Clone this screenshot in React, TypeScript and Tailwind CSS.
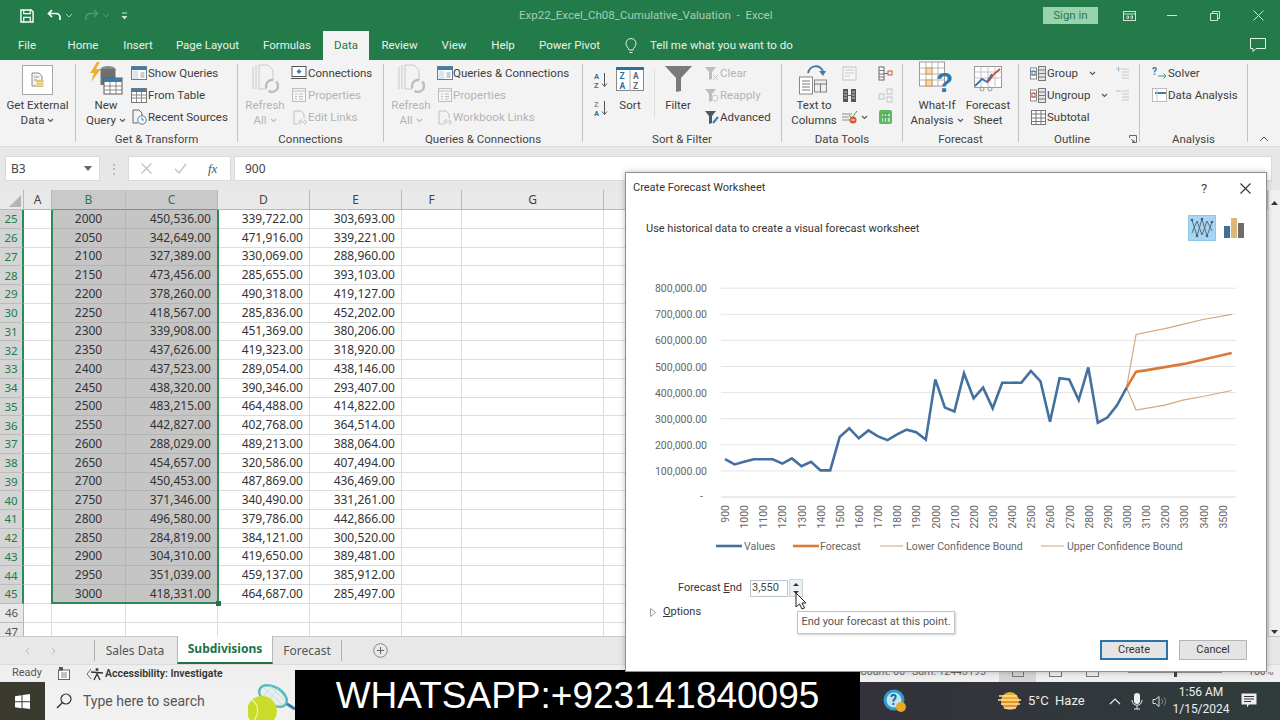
import React from "react";

const GREEN = "bg-[#227b49]";

const rows: [number, string, string, string, string][] = [
  [25, "2000", "450,536.00", "339,722.00", "303,693.00"],
  [26, "2050", "342,649.00", "471,916.00", "339,221.00"],
  [27, "2100", "327,389.00", "330,069.00", "288,960.00"],
  [28, "2150", "473,456.00", "285,655.00", "393,103.00"],
  [29, "2200", "378,260.00", "490,318.00", "419,127.00"],
  [30, "2250", "418,567.00", "285,836.00", "452,202.00"],
  [31, "2300", "339,908.00", "451,369.00", "380,206.00"],
  [32, "2350", "437,626.00", "419,323.00", "318,920.00"],
  [33, "2400", "437,523.00", "289,054.00", "438,146.00"],
  [34, "2450", "438,320.00", "390,346.00", "293,407.00"],
  [35, "2500", "483,215.00", "464,488.00", "414,822.00"],
  [36, "2550", "442,827.00", "402,768.00", "364,514.00"],
  [37, "2600", "288,029.00", "489,213.00", "388,064.00"],
  [38, "2650", "454,657.00", "320,586.00", "407,494.00"],
  [39, "2700", "450,453.00", "487,869.00", "436,469.00"],
  [40, "2750", "371,346.00", "340,490.00", "331,261.00"],
  [41, "2800", "496,580.00", "379,786.00", "442,866.00"],
  [42, "2850", "284,819.00", "384,121.00", "300,520.00"],
  [43, "2900", "304,310.00", "419,650.00", "389,481.00"],
  [44, "2950", "351,039.00", "459,137.00", "385,912.00"],
  [45, "3000", "418,331.00", "464,687.00", "285,497.00"],
];

const Chevron = ({ c = "#555" }: { c?: string }) => (
  <svg width="7" height="5" viewBox="0 0 7 5" className="inline-block ml-[3px] align-middle">
    <path d="M1 1l2.500 2.500L6 1" stroke={c} strokeWidth="1.100" fill="none" />
  </svg>
);

const Small = ({ w, icon, text, off, chev, iconW = 18 }: { w: number; icon?: React.ReactNode; text?: string; off?: boolean; chev?: boolean; iconW?: number }) => (
  <div className="h-[22px] flex items-center whitespace-nowrap" style={{ width: w }}>
    <div className="shrink-0 flex items-center justify-center" style={{ width: iconW }}>{icon}</div>
    {text && <span className={`mt-[2px] ${off ? "text-[#b4b4b4]" : "text-[#3d3d3d]"}`}>{text}</span>}
    {chev && <span className="ml-[8px]"><Chevron /></span>}
  </div>
);

const Big = ({ w, icon, l1, l2, off, chev }: { w: number; icon: React.ReactNode; l1: string; l2: string; off?: boolean; chev?: boolean }) => (
  <div className={`flex flex-col items-center shrink-0 -mt-[2px] ${off ? "text-[#b4b4b4]" : "text-[#3d3d3d]"}`} style={{ width: w }}>
    <div className="h-[38px] flex items-center justify-center">{icon}</div>
    <div className="leading-[15px] whitespace-nowrap">{l1}</div>
    <div className="leading-[15px] whitespace-nowrap">{l2}{chev && <Chevron c={off ? "#bbb" : "#555"} />}</div>
  </div>
);

const Group = ({ w, label, children, pr = 0 }: { w: number; label: string; children: React.ReactNode; pr?: number }) => (
  <div className="flex flex-col shrink-0" style={{ width: w }}>
    <div className="h-[72px] pt-[2px] flex">{children}</div>
    <div className="h-[14px] leading-[14px] text-center whitespace-nowrap text-[#444]" style={{ paddingRight: pr }}>{label}</div>
  </div>
);
const Sep = () => <div className="w-px my-[4px] bg-[#c4c4c4] shrink-0" />;

/* Ribbon icons */
const ExtData = () => (
  <div className="w-[31px] h-[30px] border border-[#a5a5a5] bg-white flex items-center justify-center mt-[2px]">
    <svg width="15" height="16" viewBox="0 0 15 16"><path d="M2 1h7l3 3v10H2z" fill="#f2f2f2" stroke="#8a8a8a" /><path d="M4 5h5M4 8h3" stroke="#999" /><rect x="6.500" y="8" width="7" height="7" fill="#e2c46a" /><path d="M6.500 10.500h7M6.500 13h7" stroke="#f4e6b8" /></svg>
  </div>
);
const NewQuery = () => (
  <svg width="34" height="36" viewBox="0 0 34 36">
    <path d="M8 1L1 12h4l-3 9 10-13H7l4-7z" fill="#eab02f" />
    <ellipse cx="19" cy="8" rx="7.500" ry="3" fill="#8a8a8a" />
    <path d="M11.500 8v16h15V8z" fill="#6f6f6f" />
    <rect x="15" y="17" width="18" height="16" fill="#fff" stroke="#5b5b5b" />
    <rect x="15" y="17" width="18" height="4" fill="#3d7ba8" />
    <path d="M15 25h18M15 29h18M21 21v12M27 21v12" stroke="#6f6f6f" strokeWidth=".8" />
  </svg>
);
const ShowQ = () => (
  <svg width="16" height="14" viewBox="0 0 16 14"><rect x=".5" y=".5" width="15" height="13" fill="#fff" stroke="#5d7f99" /><rect x="1" y="1" width="14" height="3" fill="#3f7eaa" /><rect x="1.500" y="4.500" width="6" height="8.500" fill="#dbe7f0" /><path d="M9.500 7h4M9.500 9h4M9.500 11h4" stroke="#9a9a9a" /></svg>
);
const FromT = () => (
  <svg width="16" height="15" viewBox="0 0 16 15"><rect x=".5" y=".5" width="15" height="14" fill="#fff" stroke="#777" /><rect x="1" y="1" width="14" height="3" fill="#3f7eaa" /><path d="M1 7h14M1 10h14M5.500 4v10M10.500 4v10" stroke="#8a8a8a" /></svg>
);
const Recent = () => (
  <svg width="16" height="16" viewBox="0 0 16 16"><path d="M2 1h6l3 3v5M2 1v13h5" fill="none" stroke="#666" /><circle cx="11" cy="11" r="4.200" fill="#fff" stroke="#3f7eaa" /><path d="M11 8.500V11h2" stroke="#3f7eaa" fill="none" /></svg>
);
const Conn = () => (
  <svg width="16" height="14" viewBox="0 0 16 14"><rect x="1" y=".5" width="14" height="10" fill="#fff" stroke="#555" /><path d="M0 12.500h16" stroke="#555" /><path d="M8 3l2.500 2.500L8 8 5.500 5.500z" fill="#3f7eaa" /></svg>
);
const Props = () => (
  <svg width="14" height="14" viewBox="0 0 14 14"><rect x=".5" y=".5" width="13" height="13" fill="#f7f7f7" stroke="#bdbdbd" /><path d="M1 3h12M3 6h2M7 6h4M3 8.500h2M7 8.500h4M3 11h2M7 11h4" stroke="#bdbdbd" /></svg>
);
const Links = () => (
  <svg width="15" height="15" viewBox="0 0 15 15"><path d="M2 1h7l3 3v4M2 1v13h4" fill="none" stroke="#c0c0c0" /><path d="M7 12a2 2 0 012-2h1M14 12a2 2 0 00-2-2M9 14a2 2 0 01-2-2M12 14a2 2 0 002-2M9 12h3" fill="none" stroke="#bdbdbd" /></svg>
);
const RefreshIc = () => (
  <svg width="28" height="30" viewBox="0 0 28 30"><path d="M2 3v22M5 1v24M8 1h9l5 5v10M8 1v24h8" fill="none" stroke="#c8c8c8" /><circle cx="21" cy="22" r="6" fill="#f3f3f3" stroke="#bdbdbd" strokeWidth="2.400" strokeDasharray="13 3" /></svg>
);
const AZ = ({ rev }: { rev?: boolean }) => (
  <svg width="14" height="18" viewBox="0 0 14 18">
    <text x="0" y="8" fontSize="7.500" fontWeight="700" fill={rev ? "#8a8a8a" : "#2e6f9e"}>{rev ? "Z" : "A"}</text>
    <text x="0" y="17" fontSize="7.500" fontWeight="700" fill={rev ? "#2e6f9e" : "#666"}>{rev ? "A" : "Z"}</text>
    <path d="M10.500 2v13M8 12.500l2.500 3 2.500-3" stroke="#555" fill="none" />
  </svg>
);
const ZA = () => (
  <svg width="28" height="24" viewBox="0 0 28 24">
    <rect x=".5" y=".5" width="27" height="23" fill="#fff" stroke="#888" />
    <rect x="0" y="0" width="28" height="3" fill="#2e6f9e" />
    <path d="M14 3v21" stroke="#aaa" />
    <text x="3.500" y="12" fontSize="8.500" fontWeight="700" fill="#2e6f9e">Z</text>
    <text x="3.500" y="22" fontSize="8.500" fontWeight="700" fill="#2e6f9e">A</text>
    <text x="17" y="12" fontSize="8.500" fontWeight="700" fill="#666">A</text>
    <text x="17" y="22" fontSize="8.500" fontWeight="700" fill="#666">Z</text>
  </svg>
);
const Funnel = () => (
  <svg width="27" height="26" viewBox="0 0 27 26"><path d="M0 0h27L16 12v13l-5 1V12z" fill="#7a7a7a" /></svg>
);
const SmallFunnel = ({ c, extra }: { c: string; extra?: React.ReactNode }) => (
  <svg width="16" height="15" viewBox="0 0 16 15"><path d="M1 1h11L8 6v7l-3 1V6z" fill={c} />{extra}</svg>
);
const TextCols = () => (
  <svg width="30" height="36" viewBox="0 0 30 36">
    <path d="M9 12C11 4 20 3 24 10" fill="none" stroke="#3f7eaa" strokeWidth="2" />
    <path d="M20 10h7l-3 5z" fill="#3f7eaa" />
    <rect x=".5" y="16" width="13" height="17" fill="#fff" stroke="#888" />
    <path d="M3 20h8M3 23h8M3 26h8M3 29h8" stroke="#777" />
    <rect x="15.500" y="19" width="12" height="12" fill="#eee" stroke="#888" />
    <path d="M15.500 23h12M21.500 23v8" stroke="#777" />
  </svg>
);
const Tiny = ({ kind }: { kind: number }) => {
  if (kind === 0) return <svg width="15" height="15" viewBox="0 0 15 15"><rect x="1" y="1" width="13" height="13" fill="#f7f7f7" stroke="#c4c4c4" /><path d="M3 4h9M3 7h9M3 10h5" stroke="#c8c8c8" /></svg>;
  if (kind === 1) return <svg width="15" height="15" viewBox="0 0 15 15"><rect x="1" y="1" width="5" height="13" fill="#555" /><rect x="9" y="1" width="5" height="13" fill="#555" /><path d="M6 7.500h3" stroke="#3f7eaa" /><path d="M2 4h3M2 7h3M2 10h3M10 4h3M10 7h3M10 10h3" stroke="#ccc" /></svg>;
  if (kind === 2) return <svg width="17" height="14" viewBox="0 0 17 14"><path d="M1 4h10M1 7h7M1 10h8" stroke="#8a8a8a" /><path d="M8 5l3 3 5-7" stroke="#4d9a5f" fill="none" /><circle cx="12" cy="10" r="3.500" fill="#d9572f" /><path d="M10 10h4" stroke="#fff" /></svg>;
  if (kind === 3) return <svg width="15" height="15" viewBox="0 0 15 15"><rect x="1" y="1" width="5" height="13" fill="#fff" stroke="#666" /><path d="M1 4.500h5M1 8h5M1 11h5" stroke="#777" /><rect x="10" y="5" width="4" height="4" fill="none" stroke="#cf5a34" /><path d="M6 7.500h4" stroke="#3f7eaa" /></svg>;
  if (kind === 4) return <svg width="15" height="15" viewBox="0 0 15 15"><rect x="1" y="6" width="5" height="5" fill="none" stroke="#c4c4c4" /><rect x="9" y="1" width="5" height="5" fill="none" stroke="#c4c4c4" /><rect x="9" y="9" width="5" height="5" fill="none" stroke="#c4c4c4" /></svg>;
  return <svg width="15" height="16" viewBox="0 0 15 16"><rect x="1" y="1" width="13" height="14" rx="2" fill="#5cb85f" /><rect x="4" y="5" width="8" height="8" fill="#b9e3b3" /><path d="M6 4v9M9 4v9M4 8h8" stroke="#3a8a4a" /></svg>;
};
const WhatIf = () => (
  <svg width="36" height="36" viewBox="0 0 36 36" className="overflow-visible">
    <rect x=".5" y="1" width="25" height="24" fill="#fff" stroke="#9a9a9a" />
    <path d="M.5 7h25M.5 13h25M.5 19h25M7 1v24M13 1v24M19 1v24" stroke="#b5b5b5" />
    <rect x="7" y="7" width="6" height="6" fill="#f3d9b0" stroke="#d99a4a" />
    <rect x="7" y="19" width="6" height="6" fill="#f3d9b0" stroke="#d99a4a" />
    <text x="17" y="31" fontSize="28" fontWeight="700" fill="#2f78ae" fontFamily="'Liberation Sans',sans-serif">?</text>
  </svg>
);
const FSheet = () => (
  <svg width="28" height="26" viewBox="0 0 28 26">
    <rect x=".5" y=".5" width="27" height="21" fill="#fff" stroke="#9a9a9a" />
    <path d="M.5 6h27M.5 12h27M7 .5v21M14 .5v21M21 .5v21" stroke="#c4c4c4" />
    <path d="M1 20l7-7 5 3 5-8" stroke="#2f78ae" strokeWidth="1.800" fill="none" />
    <path d="M14 16l6-8 6-5" stroke="#cf4a35" strokeWidth="1.800" fill="none" />
    <circle cx="8" cy="23" r="2" fill="none" stroke="#999" /><circle cx="16" cy="23" r="2" fill="none" stroke="#999" />
  </svg>
);
const Outline = ({ red }: { red?: boolean }) => (
  <svg width="16" height="15" viewBox="0 0 16 15"><rect x=".5" y="2" width="6" height="11" fill="#fff" stroke="#888" /><path d="M1 5.500h5M1 9h5" stroke="#999" /><rect x="2" y="5" width="3" height="4" fill="none" stroke={red ? "#cf5a34" : "#3f7eaa"} /><rect x="8.500" y=".5" width="7" height="14" fill="#e5e5e5" stroke="#777" /><path d="M8.500 4h7M8.500 7.500h7M8.500 11h7" stroke="#777" /></svg>
);
const Subt = () => (
  <svg width="15" height="15" viewBox="0 0 15 15"><rect x=".5" y=".5" width="14" height="14" fill="#fff" stroke="#777" /><path d="M.5 4h14M.5 8h14M.5 11.500h14M5 .5v14M10 .5v14" stroke="#777" /></svg>
);
const PlusMinus = ({ plus }: { plus?: boolean }) => (
  <svg width="14" height="14" viewBox="0 0 14 14"><path d="M6 3h7M6 6h7M6 9h7M6 12h7" stroke="#c8c8c8" />{plus ? <path d="M0 3h5M2.500 .5v5" stroke="#9fc1da" /> : <path d="M0 3h5" stroke="#9fc1da" />}</svg>
);

const values = [145, 125, 135, 145, 145, 145, 128, 148, 118, 135, 102, 102, 230, 263, 225, 255, 232, 218, 240, 258, 248, 220,
  450.5, 342.6, 327.4, 473.5, 378.3, 418.6, 339.9, 437.6, 437.5, 438.3, 483.2, 442.8, 288, 454.7, 450.5, 371.3, 496.6, 284.8, 304.3, 351, 418.3];
const X = (i: number) => 724 + 9.56 * i;
const Y = (v: number) => 497 - v * 0.261;
const line = (pts: [number, number][]) => pts.map(([i, v]) => `${X(i).toFixed(1)},${Y(v).toFixed(1)}`).join(" ");
const valuePts = line(values.map((v, i) => [i, v] as [number, number]));
const fc = line([[42, 418.3], [43, 480], [44, 485], [48, 510], [53, 552]]);
const low = line([[42, 418.3], [43, 333], [46, 352], [48, 372], [50, 385], [53, 408]]);
const up = line([[42, 418.3], [43, 623], [46, 645], [48, 662], [50, 680], [53, 700]]);
const yLabels = ["800,000.00", "700,000.00", "600,000.00", "500,000.00", "400,000.00", "300,000.00", "200,000.00", "100,000.00"];
const xLabels = Array.from({ length: 27 }, (_, i) => String(900 + i * 100));

const Chart = () => (
  <svg width="642" height="300" viewBox="625 265 642 300" className="block">
    {yLabels.map((t, i) => {
      const y = Y((8 - i) * 100);
      return (
        <g key={t}>
          <line x1="720" x2="1235" y1={y} y2={y} stroke="#e4e4e4" />
          <text x="706" y={y + 4} textAnchor="end" fontSize="10.500" fill="#666">{t}</text>
        </g>
      );
    })}
    <line x1="720" x2="1235" y1="497" y2="497" stroke="#d8d8d8" />
    <text x="702" y="500" textAnchor="end" fontSize="10.500" fill="#666">-</text>
    {xLabels.map((t, i) => (
      <text key={t} transform={`translate(${724 + i * 19.14 + 4} 505) rotate(-90)`} textAnchor="end" fontSize="10.500" fill="#666">{t}</text>
    ))}
    <polyline points={low} fill="none" stroke="#d6a878" strokeWidth="1.200" />
    <polyline points={up} fill="none" stroke="#d6a878" strokeWidth="1.200" />
    <polyline points={fc} fill="none" stroke="#d9793a" strokeWidth="2.600" />
    <polyline points={valuePts} fill="none" stroke="#44709f" strokeWidth="2.600" />
    <line x1="715" x2="741" y1="546" y2="546" stroke="#44709f" strokeWidth="2.600" />
    <text x="743" y="550" fontSize="10.500" fill="#666">Values</text>
    <line x1="792" x2="818" y1="546" y2="546" stroke="#d9793a" strokeWidth="2.600" />
    <text x="819" y="550" fontSize="10.500" fill="#666">Forecast</text>
    <line x1="879" x2="902" y1="546" y2="546" stroke="#d6b48c" strokeWidth="1.200" />
    <text x="905" y="550" fontSize="10.500" fill="#666">Lower Confidence Bound</text>
    <line x1="1040" x2="1063" y1="546" y2="546" stroke="#d6b48c" strokeWidth="1.200" />
    <text x="1066" y="550" fontSize="10.500" fill="#666">Upper Confidence Bound</text>
  </svg>
);

const Cell = ({ w, sel, children, align = "r" }: { w: number; sel?: boolean; children?: React.ReactNode; align?: "r" | "c" }) => (
  <div className={`shrink-0 h-full border-r border-b flex items-center ${align === "c" ? "justify-center" : "justify-end pr-[6px]"} ${sel ? "bg-[#c5c5c5] border-[#b4b4b4]" : "bg-white border-[#dcdcdc]"}`} style={{ width: w }}>
    {children}
  </div>
);

const Row = ({ n, b, c, d, e }: { n: number; b?: string; c?: string; d?: string; e?: string }) => {
  const sel = !!b;
  return (
    <div className="flex h-[18.75px] text-[12px] text-[#333] font-['Noto_Sans',sans-serif]">
      <div className={`w-[24px] shrink-0 flex items-center justify-center border-b border-[#bcbcbc] text-[11.5px] ${sel ? "bg-[#d4d4d4] text-[#1f7a4a] border-r-2 border-r-[#2a8a58]" : "bg-[#e8e8e8] text-[#555] border-r border-r-[#b5b5b5]"}`}>{n}</div>
      <Cell w={28} />
      <Cell w={74} sel={sel} align="c">{b}</Cell>
      <Cell w={92} sel={sel}>{c}</Cell>
      <Cell w={92}>{d}</Cell>
      <Cell w={92}>{e}</Cell>
      <Cell w={60} />
      <Cell w={142} />
      <Cell w={664} />
    </div>
  );
};

const HeadCell = ({ w, t, sel }: { w: number; t: string; sel?: boolean }) => (
  <div className={`shrink-0 h-full flex items-center justify-center border-r border-b border-[#b9b9b9] ${sel ? "bg-[#c9c9c9] text-[#2b7a52] border-b-[#6f9a82]" : "bg-[#e9e9e9] text-[#444]"}`} style={{ width: w }}>{t}</div>
);

export default function App() {
  return (
    <div className="relative w-[1280px] h-[720px] overflow-hidden flex flex-col bg-white font-['Roboto','Noto_Sans',sans-serif] text-[11.5px]">
      {/* title bar */}
      <div className={`h-[31px] shrink-0 ${GREEN} flex items-center`}>
        <div className="w-[20px]" />
        <svg width="14" height="14" viewBox="0 0 15 15"><path d="M1 1h11l2 2v11H1z" fill="none" stroke="#fff" strokeWidth="1.500" /><path d="M4 1v4h7V1M4 14V9h7v5" fill="none" stroke="#fff" strokeWidth="1.300" /></svg>
        <div className="w-[13px]" />
        <svg width="15" height="13" viewBox="0 0 15 13"><path d="M5 1L1.500 4.500 5 8M2 4.500h7a4 4 0 014 4V11" fill="none" stroke="#fff" strokeWidth="1.700" /></svg>
        <svg width="8" height="5" viewBox="0 0 8 5" className="ml-[3px]"><path d="M1 1l3 3 3-3" stroke="#a5cdb4" fill="none" /></svg>
        <div className="w-[11px]" />
        <svg width="15" height="13" viewBox="0 0 15 13"><path d="M10 1l3.500 3.500L10 8M13 4.500H6a4 4 0 00-4 4V11" fill="none" stroke="#4d9a6c" strokeWidth="1.700" /></svg>
        <svg width="8" height="5" viewBox="0 0 8 5" className="ml-[3px]"><path d="M1 1l3 3 3-3" stroke="#4d9a6c" fill="none" /></svg>
        <div className="w-[11px]" />
        <svg width="7" height="8" viewBox="0 0 7 8"><path d="M1 1h5" stroke="#cfe3d6" /><path d="M.5 4h6l-3 3.500z" fill="#cfe3d6" /></svg>
        <div className="w-[391px]" />
        <div className="w-[243px] text-center whitespace-nowrap text-[#a9cdb6]">Exp22_Excel_Ch08_Cumulative_Valuation&nbsp; -&nbsp; Excel</div>
        <div className="w-[281px]" />
        <div className="w-[55px] h-[17px] bg-[#98d3ae] text-[#2a7a50] flex items-center justify-center">Sign in</div>
        <div className="w-[25px]" />
        <svg width="13" height="10" viewBox="0 0 13 10"><rect x=".5" y=".5" width="12" height="9" fill="none" stroke="#cfe3d6" /><path d="M.5 3h12M4 5h1.500v2.500H4zM8 5h1.500v2.500H8z" stroke="#cfe3d6" /></svg>
        <div className="w-[31px]" />
        <div className="w-[10px] h-px bg-[#cfe3d6]" />
        <div className="w-[33px]" />
        <svg width="10" height="10" viewBox="0 0 10 10"><path d="M2.500 2.500V.5h7v7h-2M.5 2.500h7v7h-7z" fill="none" stroke="#cfe3d6" /></svg>
        <div className="w-[33px]" />
        <svg width="11" height="11" viewBox="0 0 11 11"><path d="M.5.500l10 10M10.500.500l-10 10" stroke="#cfe3d6" /></svg>
      </div>

      {/* tabs */}
      <div className={`h-[29px] shrink-0 ${GREEN} flex items-stretch text-[#e8f2ec]`}>
        {([["File", 54], ["Home", 58], ["Insert", 52], ["Page Layout", 87], ["Formulas", 72]] as [string, number][]).map(([t, w]) => (
          <div key={t} className="flex items-center justify-center" style={{ width: w }}>{t}</div>
        ))}
        <div className="w-[46px] bg-[#f3f3f3] text-[#227b49] flex items-center justify-center">Data</div>
        {([["Review", 61], ["View", 48], ["Help", 50], ["Power Pivot", 83]] as [string, number][]).map(([t, w]) => (
          <div key={t} className="flex items-center justify-center" style={{ width: w }}>{t}</div>
        ))}
        <div className="w-[39px] flex items-center justify-center">
          <svg width="12" height="16" viewBox="0 0 12 16"><path d="M4 12C3.500 9.500 1 8.500 1 5.500a5 5 0 0110 0C11 8.500 8.500 9.500 8 12zM4.500 14.500h3" fill="none" stroke="#e8f2ec" /></svg>
        </div>
        <div className="flex items-center whitespace-nowrap">Tell me what you want to do</div>
        <div className="flex-1 flex items-center justify-end pr-[14px]">
          <svg width="16" height="15" viewBox="0 0 16 15"><path d="M.5.500h15v10H6l-3 3v-3H.5z" fill="none" stroke="#e8f2ec" /></svg>
        </div>
      </div>

      {/* ribbon */}
      <div className="h-[86px] shrink-0 bg-[#f3f3f3] flex relative">
        <div className="w-[75px] shrink-0 flex flex-col">
          <div className="h-[72px] pt-[2px] flex"><Big w={75} icon={<ExtData />} l1="Get External" l2="Data" chev /></div>
        </div>
        <Sep />
        <Group w={161} label="Get & Transform">
          <div className="ml-[10px]"><Big w={40} icon={<NewQuery />} l1="New" l2="Query" chev /></div>
          <div className="ml-[4px] flex flex-col"><Small w={105} icon={<ShowQ />} text="Show Queries" /><Small w={105} icon={<FromT />} text="From Table" /><Small w={105} icon={<Recent />} text="Recent Sources" /></div>
        </Group>
        <Sep />
        <Group w={145} label="Connections">
          <div className="ml-[8px]"><Big w={38} icon={<RefreshIc />} l1="Refresh" l2="All" chev off /></div>
          <div className="ml-[6px] flex flex-col"><Small w={90} iconW={18} icon={<Conn />} text="Connections" /><Small w={90} iconW={18} icon={<Props />} text="Properties" off /><Small w={90} iconW={18} icon={<Links />} text="Edit Links" off /></div>
        </Group>
        <Sep />
        <Group w={198} label="Queries & Connections">
          <div className="ml-[8px]"><Big w={38} icon={<RefreshIc />} l1="Refresh" l2="All" chev off /></div>
          <div className="ml-[6px] flex flex-col"><Small w={140} iconW={17} icon={<ShowQ />} text="Queries & Connections" /><Small w={140} iconW={17} icon={<Props />} text="Properties" off /><Small w={140} iconW={17} icon={<Links />} text="Workbook Links" off /></div>
        </Group>
        <Sep />
        <Group w={198} label="Sort & Filter">
          <div className="ml-[11px] flex flex-col gap-[10px] pt-[9px] w-[16px]"><AZ /><AZ rev /></div>
          <div className="ml-[1px]"><Big w={38} icon={<ZA />} l1="Sort" l2=" " /></div>
          <div className="w-px h-[48px] mt-[8px] ml-[5px] bg-[#e0e0e0]" />
          <div className="ml-[4px]"><Big w={38} icon={<Funnel />} l1="Filter" l2=" " /></div>
          <div className="ml-[6px] flex flex-col">
            <Small w={78} iconW={17} icon={<SmallFunnel c="#bdbdbd" extra={<path d="M9 9l5 5M14 9l-5 5" stroke="#c8c8c8" />} />} text="Clear" off />
            <Small w={78} iconW={17} icon={<SmallFunnel c="#bdbdbd" extra={<circle cx="11" cy="10" r="3" fill="none" stroke="#b9cdda" />} />} text="Reapply" off />
            <Small w={78} iconW={17} icon={<SmallFunnel c="#4c5a66" extra={<path d="M9 13l5-6" stroke="#3f7eaa" strokeWidth="2" />} />} text="Advanced" />
          </div>
        </Group>
        <Sep />
        <Group w={120} label="Data Tools">
          <div className="ml-[9px]"><Big w={46} icon={<TextCols />} l1="Text to" l2="Columns" /></div>
          <div className="ml-[3px] flex flex-col"><Small w={36} icon={<Tiny kind={0} />} /><Small w={36} icon={<Tiny kind={1} />} /><Small w={36} iconW={28} icon={<span className="flex items-center"><Tiny kind={2} /><Chevron /></span>} /></div>
          <div className="flex flex-col"><Small w={18} icon={<Tiny kind={3} />} /><Small w={18} icon={<Tiny kind={4} />} /><Small w={18} icon={<Tiny kind={5} />} /></div>
        </Group>
        <Sep />
        <Group w={115} label="Forecast">
          <div className="ml-[7px]"><Big w={54} icon={<WhatIf />} l1="What-If" l2="Analysis" chev /></div>
          <div><Big w={48} icon={<FSheet />} l1="Forecast" l2="Sheet" /></div>
        </Group>
        <Sep />
        <Group w={120} label="Outline" pr={14}>
          <div className="ml-[10px] flex flex-col"><Small w={80} iconW={18} icon={<Outline />} text="Group" chev /><Small w={80} iconW={18} icon={<Outline red />} text="Ungroup" chev /><Small w={80} iconW={18} icon={<Subt />} text="Subtotal" /></div>
          <div className="ml-[7px] flex flex-col"><Small w={14} iconW={14} icon={<PlusMinus plus />} /><Small w={14} iconW={14} icon={<PlusMinus />} /></div>
        </Group>
        <Sep />
        <Group w={107} label="Analysis">
          <div className="ml-[10px] flex flex-col">
            <Small w={95} icon={<svg width="15" height="14" viewBox="0 0 15 14"><text x="0" y="9" fontSize="10" fontWeight="700" fill="#2f78ae">?</text><path d="M6 10h8M11.500 7.500l2.500 2.500-2.500 2.500" stroke="#4d9a6c" fill="none" /></svg>} text="Solver" />
            <Small w={95} icon={<svg width="15" height="14" viewBox="0 0 15 14"><rect x=".5" y=".5" width="14" height="13" fill="#fff" stroke="#bbb" /><rect x="3" y="4" width="11" height="2" fill="#3f7eaa" /><path d="M5 .5v13" stroke="#ccc" /></svg>} text="Data Analysis" />
          </div>
        </Group>
        <Sep />
        <div className="flex-1 flex items-end justify-center pb-[4px]">
          <svg width="10" height="6" viewBox="0 0 10 6"><path d="M1 5l4-4 4 4" fill="none" stroke="#555" /></svg>
        </div>
        <svg width="8" height="8" viewBox="0 0 8 8" className="absolute left-[1129px] top-[75px]"><path d="M.5 3V.5h7v7H3M2 4l3 3M5 5v2H3" fill="none" stroke="#666" /></svg>
      </div>

      {/* formula bar */}
      <div className="h-[44px] shrink-0 bg-[#e7e7e7] border-t border-[#dadada] flex items-start pt-[9px] text-[12px] text-[#444] font-['Noto_Sans',sans-serif]">
        <div className="ml-[5px] w-[95px] h-[25px] bg-white border border-[#dadada] flex items-center justify-between pl-[5px] pr-[7px]">
          <span>B3</span>
          <svg width="8" height="5" viewBox="0 0 8 5"><path d="M0 0h8L4 5z" fill="#666" /></svg>
        </div>
        <div className="w-[28px] h-[25px] flex items-center justify-center text-[#aaa] leading-none">⋮</div>
        <div className="w-[103px] h-[25px] bg-white border border-[#dadada] flex items-center">
          <svg width="11" height="11" viewBox="0 0 11 11" className="ml-[12px]"><path d="M.5.500l10 10M10.500.500l-10 10" stroke="#c0c0c0" strokeWidth="1.200" /></svg>
          <svg width="13" height="11" viewBox="0 0 13 11" className="ml-[22px]"><path d="M1 6l4 4 7-9" stroke="#c0c0c0" strokeWidth="1.300" fill="none" /></svg>
          <span className="ml-[21px] italic font-['Liberation_Serif',serif] text-[#555] text-[13px]">fx</span>
        </div>
        <div className="ml-[3px] w-[1038px] h-[25px] bg-white border border-[#dadada] flex items-center pl-[10px]">900</div>
      </div>

      {/* grid */}
      <div className="flex-1 min-h-0 flex overflow-hidden relative font-['Noto_Sans',sans-serif]">
        <div className="flex-1 min-w-0 overflow-hidden">
          <div className="flex h-[20px] text-[12px]">
            <div className="w-[24px] shrink-0 bg-[#e9e9e9] border-r border-b border-[#b9b9b9] relative">
              <svg width="12" height="12" viewBox="0 0 12 12" className="absolute right-[2px] bottom-[2px]"><path d="M12 0v12H0z" fill="#b5b5b5" /></svg>
            </div>
            <HeadCell w={28} t="A" />
            <HeadCell w={74} t="B" sel />
            <HeadCell w={92} t="C" sel />
            <HeadCell w={92} t="D" />
            <HeadCell w={92} t="E" />
            <HeadCell w={60} t="F" />
            <HeadCell w={142} t="G" />
            <HeadCell w={664} t="H" />
          </div>
          {rows.map(([n, b, c, d, e]) => <Row key={n} n={n} b={b} c={c} d={d} e={e} />)}
          <Row n={46} />
          <Row n={47} />
        </div>
        <div className="w-[12px] shrink-0 bg-[#f0f0f0] border-l border-[#d0d0d0] flex flex-col justify-between items-center pt-[11px] pb-[2px]">
          <svg width="7" height="4" viewBox="0 0 7 4"><path d="M3.500 0L7 4H0z" fill="#333" /></svg>
          <svg width="7" height="4" viewBox="0 0 7 4"><path d="M0 0h7L3.500 4z" fill="#333" /></svg>
        </div>
        {/* selection outline */}
        <div className="absolute left-[51px] top-[20px] w-[168px] h-[394px] border-x-2 border-b-2 border-[#2a8a58]" />
        <div className="absolute left-[216px] top-[411px] w-[5px] h-[5px] bg-[#217346]" />
      </div>

      {/* sheet tabs */}
      <div className="h-[28px] shrink-0 bg-[#e8e8e8] border-t border-[#c8c8c8] flex items-stretch text-[12px] text-[#555] font-['Noto_Sans',sans-serif]">
        <div className="w-[94px] flex items-center">
          <svg width="5" height="8" viewBox="0 0 5 8" className="ml-[25px]"><path d="M4 1L1 4l3 3" fill="none" stroke="#bbb" /></svg>
          <svg width="5" height="8" viewBox="0 0 5 8" className="ml-[21px]"><path d="M1 1l3 3-3 3" fill="none" stroke="#bbb" /></svg>
        </div>
        <div className="w-[83px] border-l border-[#b0b0b0] my-[3px] pr-[2px] flex items-center justify-center">Sales Data</div>
        <div className="w-[96px] bg-white border-x border-[#b8b8b8] border-b-2 border-b-[#217346] flex items-center justify-center font-bold text-[#217346] -mt-px">Subdivisions</div>
        <div className="w-[69px] border-r border-[#b0b0b0] my-[3px] flex items-center justify-center">Forecast</div>
        <div className="w-[76px] flex items-center justify-center">
          <svg width="15" height="15" viewBox="0 0 15 15"><circle cx="7.500" cy="7.500" r="6.800" fill="none" stroke="#888" /><path d="M7.500 4v7M4 7.500h7" stroke="#666" /></svg>
        </div>
      </div>

      {/* status bar */}
      <div className="h-[18px] shrink-0 bg-[#efefef] border-t border-[#dcdcdc] flex items-center text-[10.5px] text-[#555]">
        <span className="ml-[12px] w-[46px] text-[11px]">Ready</span>
        <svg width="12" height="13" viewBox="0 0 12 13"><rect x=".5" y="3" width="11" height="9.500" fill="#fff" stroke="#666" /><rect x="1" y="0" width="4" height="3.500" fill="#555" /><path d="M3 6h6M3 8h6M3 10h6" stroke="#888" /></svg>
        <svg width="18" height="14" viewBox="0 0 18 14" className="ml-[16px]"><path d="M5 2L1 7l4 5" fill="none" stroke="#666" /><circle cx="11" cy="2.500" r="1.500" fill="#444" /><path d="M5 5l12 1M8 13l3-6 3 6" fill="none" stroke="#333" strokeWidth="1.300" /></svg>
        <span className="ml-[1px] font-semibold text-[#333] whitespace-nowrap">Accessibility: Investigate</span>
      </div>

      {/* taskbar */}
      <div className="h-[38px] shrink-0 flex items-stretch">
        <div className="w-[45px] bg-[#3a3a2e] flex items-center justify-center">
          <svg width="15" height="15" viewBox="0 0 15 15"><path d="M0 2.200L6.500 1.200v6H0zM7.500 1l7.500-1v7.200H7.500zM0 8.200h6.500v6L0 13.200zM7.500 8.200H15V15l-7.500-1z" fill="#fff" /></svg>
        </div>
        <div className="w-[250px] bg-[#f1f1f1] flex items-center relative overflow-hidden">
          <svg width="16" height="16" viewBox="0 0 16 16" className="ml-[11px]"><circle cx="10" cy="6" r="5" fill="none" stroke="#333" strokeWidth="1.200" /><path d="M6.500 9.500L1 15" stroke="#333" strokeWidth="1.400" /></svg>
          <span className="ml-[11px] text-[14px] text-[#555] whitespace-nowrap">Type here to search</span>
          <svg width="48" height="38" viewBox="0 0 48 38" className="absolute left-[203px] top-0">
            <path d="M36 20l11 7" stroke="#2f7fa0" strokeWidth="3" />
            <ellipse cx="25" cy="14" rx="15" ry="9" transform="rotate(30 25 14)" fill="#e9eeee" stroke="#58bcc0" strokeWidth="2.500" />
            <path d="M16 6l18 16M22 4l14 14M12 12l16 12M20 20l10-14M14 16l10-12" stroke="#c3d6d8" strokeWidth=".8" />
            <circle cx="14" cy="29" r="15" fill="#c9dc2a" />
            <path d="M4 18c7 5 7 13 2 21" stroke="#eef5b0" fill="none" strokeWidth="1.300" />
          </svg>
        </div>
        <div className="flex-1 bg-linear-to-r from-[#3f2530] via-[#34303a] to-[#2f3c3c] flex items-center text-white relative">
          <div className="ml-[588px]">
            <svg width="24" height="24" viewBox="0 0 24 24"><circle cx="11" cy="11" r="10.500" fill="#2f9ccf" /><circle cx="11" cy="11" r="7.500" fill="#bfe4f2" /><text x="7" y="16" fontSize="14" fontWeight="700" fill="#1c6d9a">?</text><circle cx="18" cy="18" r="5" fill="#e8a820" /></svg>
          </div>
          <div className="ml-[91px]">
            <svg width="24" height="22" viewBox="0 0 24 22"><path d="M3 11a9 9 0 0118 0z" fill="#f1ae2a" /><path d="M3 11a9 9 0 0018 0z" fill="#e8912a" /><path d="M1 6h18M0 10h23M3 14h19M6 18h12" stroke="#f7e2a8" strokeWidth="1.500" /></svg>
          </div>
          <span className="ml-[6px] text-[13px] whitespace-nowrap text-[#eee] w-[58px]">5°C&nbsp; Haze</span>
          <svg width="12" height="7" viewBox="0 0 12 7" className="ml-[23px]"><path d="M1 6l5-5 5 5" fill="none" stroke="#eee" strokeWidth="1.100" /></svg>
          <svg width="12" height="17" viewBox="0 0 12 17" className="ml-[10px]"><rect x="3" y="0" width="6" height="11" rx="3" fill="#eee" /><path d="M1 7c0 7 10 7 10 0M6 13v3M3 16h6" stroke="#eee" fill="none" /></svg>
          <svg width="16" height="13" viewBox="0 0 16 13" className="ml-[9px]"><path d="M1 4.500h2.500L7 1.500v10L3.500 8.500H1z" fill="none" stroke="#ddd" /><path d="M9.500 4a3.500 3.500 0 010 5M12 2.500a6 6 0 010 8" fill="none" stroke="#888" /></svg>
          <div className="ml-[8px] w-[50px] flex flex-col items-center text-[12px] leading-[17px] text-[#eee] whitespace-nowrap">
            <span>1:56 AM</span><span>1/15/2024</span>
          </div>
          <svg width="16" height="16" viewBox="0 0 16 16" className="ml-[15px]"><path d="M.5.500h15v11H8l-2 3v-3H.5z" fill="#eee" /><path d="M3 3.500h10M3 6h10M3 8.500h7" stroke="#333" /></svg>
        </div>
      </div>

      {/* caption bar over the screen */}
      <div className="absolute left-[295px] top-[670px] w-[565px] h-[50px] pt-[1px] bg-black text-white flex items-center justify-center text-[37px] font-['Liberation_Sans',sans-serif] whitespace-nowrap">
        WHATSAPP:+923141840095
      </div>

      {/* status bar items left uncovered below the dialog */}
      <div className="absolute left-[860px] top-[672px] w-[420px] h-[10px] overflow-hidden bg-[#efefef] text-[10.500px] text-[#666]">
        <div className="absolute -top-[8px] left-[0px] whitespace-nowrap">Count: 66</div>
        <div className="absolute -top-[8px] left-[52px] whitespace-nowrap">Sum: 12443195</div>
        <div className="absolute left-[139px] top-0 w-[37px] h-[10px] bg-[#d5d5d5]" />
        <div className="absolute left-[152px] -top-[4px] w-[12px] h-[9px] border border-[#777]" />
        <div className="absolute left-[189px] -top-[4px] w-[13px] h-[9px] border border-[#777]" />
        <div className="absolute left-[226px] -top-[4px] w-[13px] h-[9px] border border-[#777]" />
        <div className="absolute left-[268px] top-0 w-[94px] h-px bg-[#999]" />
        <div className="absolute left-[314px] top-0 w-[3px] h-[5px] bg-[#444]" />
        <div className="absolute left-[388px] -top-[8px] whitespace-nowrap">100%</div>
      </div>

      {/* dialog */}
      <div className="absolute left-[625px] top-[172px] w-[642px] h-[500px] bg-white border border-[#8f8f8f] shadow-[0_0_6px_rgba(0,0,0,0.25)] flex flex-col text-[#333]">
        <div className="h-[29px] shrink-0 flex items-center pl-[7px] pt-[2px] text-[11px]">
          <span className="flex-1">Create Forecast Worksheet</span>
          <span className="w-[12px] text-[13px] text-[#444] text-center mr-[30px]">?</span>
          <svg width="11" height="11" viewBox="0 0 11 11" className="mr-[15px]"><path d="M.5.500l10 10M10.500.500l-10 10" stroke="#333" strokeWidth="1.100" /></svg>
        </div>
        <div className="h-[44px] shrink-0 flex items-start pl-[20px] mt-[13px]">
          <span className="flex-1 text-[11px] pt-[6px]">Use historical data to create a visual forecast worksheet</span>
          <div className="w-[28px] h-[26px] bg-[#a6d6f4] border border-[#8fc6ea] flex items-center justify-center">
            <svg width="24" height="22" viewBox="0 0 24 22"><path d="M2 3l5 16 5-17 5 17 5-14M2 16L7 4l5 14 5-14 5 10" fill="none" stroke="#5a6a74" /><circle cx="2" cy="3" r="1.300" fill="#44607a" /><circle cx="7" cy="19" r="1.300" fill="#44607a" /><circle cx="12" cy="2" r="1.300" fill="#44607a" /><circle cx="17" cy="19" r="1.300" fill="#44607a" /><circle cx="22" cy="5" r="1.300" fill="#44607a" /></svg>
          </div>
          <svg width="20" height="20" viewBox="0 0 20 20" className="ml-[8px] mr-[22px] mt-[3px]"><rect x="0" y="8" width="6" height="12" fill="#3d7295" /><rect x="7" y="0" width="6" height="20" fill="#dcb877" /><rect x="14" y="5" width="6" height="15" fill="#6d6d6d" /></svg>
        </div>
        <div className="h-[6px] shrink-0" />
        <Chart />
        <div className="h-[14px] shrink-0" />
        <div className="flex items-center h-[18px] shrink-0 pl-[52px] text-[11px]">
          <span className="w-[72px]">Forecast <span className="underline">E</span>nd</span>
          <div className="w-[38px] h-[17px] border border-[#b7c6cf] pl-[1px] flex items-center text-[#444]">3,550</div>
          <div className="ml-[1px] w-[14px] h-[18px] flex flex-col border border-[#c9d4da] bg-[#eaf0f3] items-center justify-around">
            <svg width="6" height="3" viewBox="0 0 6 3"><path d="M3 0l3 3H0z" fill="#333" /></svg>
            <svg width="6" height="3" viewBox="0 0 6 3"><path d="M0 0h6L3 3z" fill="#333" /></svg>
          </div>
        </div>
        <div className="h-[6px] shrink-0" />
        <div className="flex items-center h-[18px] shrink-0 pl-[24px] text-[11px]">
          <svg width="6" height="9" viewBox="0 0 6 9"><path d="M.5.500l5 4-5 4z" fill="#fff" stroke="#999" /></svg>
          <span className="ml-[7px]"><span className="underline">O</span>ptions</span>
        </div>
        <div className="flex-1" />
        <div className="h-[31px] shrink-0 pr-[19px] flex items-start justify-end gap-[11px] text-[11px]">
          <div className="w-[68px] h-[20px] bg-[#e4e4e4] border-2 border-[#2a75a8] flex items-center justify-center">Create</div>
          <div className="w-[68px] h-[20px] bg-[#e4e4e4] border border-[#b5b5b5] flex items-center justify-center">Cancel</div>
        </div>
      </div>

      {/* tooltip */}
      <div className="absolute left-[797px] top-[611px] w-[158px] h-[23px] bg-white border border-[#c4c4c4] shadow-[1px_1px_2px_rgba(0,0,0,0.2)] flex items-center justify-center text-[11px] text-[#555] whitespace-nowrap">End your forecast at this point.</div>
      {/* mouse cursor */}
      <svg width="12" height="18" viewBox="0 0 12 18" className="absolute left-[795px] top-[592px]"><path d="M1 1v14l3.500-3 2.500 5 2.500-1-2.500-5H11z" fill="#fff" stroke="#222" /></svg>
    </div>
  );
}
